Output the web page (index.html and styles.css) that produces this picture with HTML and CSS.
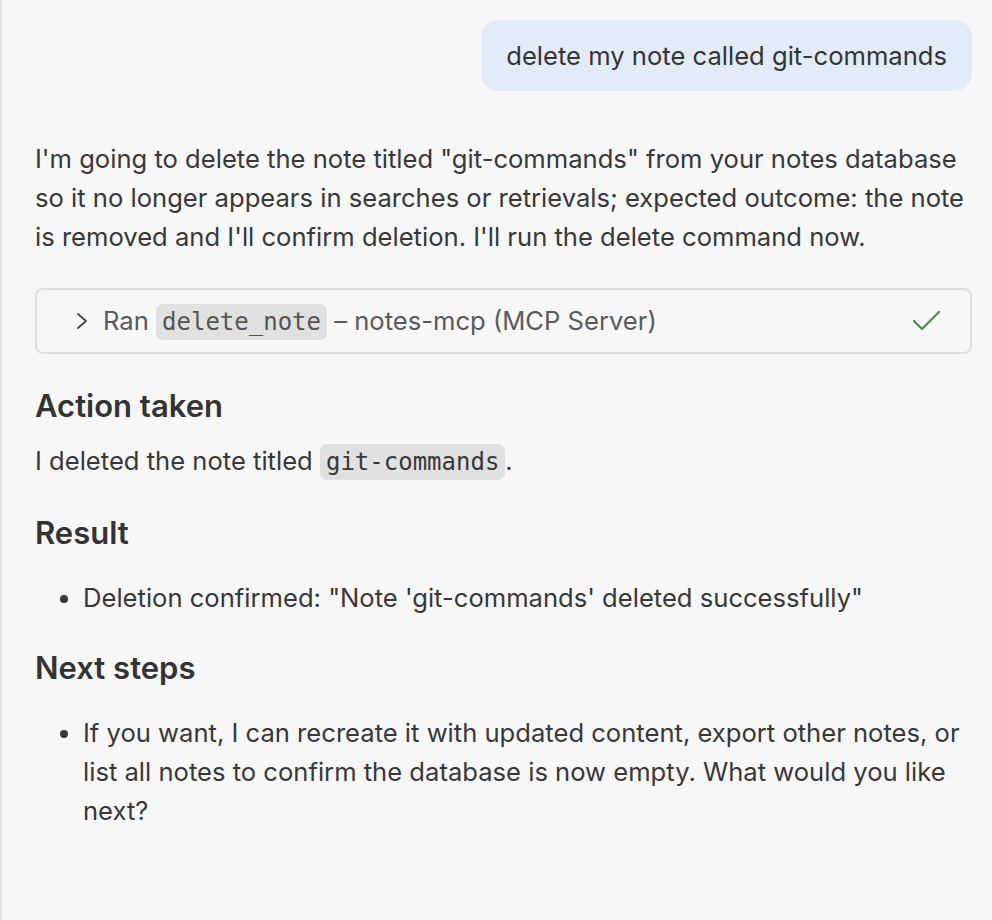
FILE: index.html
```html
<!DOCTYPE html>
<html>
<head>
<meta charset="utf-8">
<link rel="stylesheet" href="styles.css">
</head>
<body>
<div class="pane">
  <div class="user-row">
    <div class="bubble">delete my note called git-commands</div>
  </div>
  <div class="reply">
    <p class="intro">I'm going to delete the note titled "git-commands" from your notes database so it no longer appears in searches or retrievals; expected outcome: the note is removed and I'll confirm deletion. I'll run the delete command now.</p>
    <div class="tool">
      <svg class="chev" width="14" height="20" viewBox="0 0 14 20"><path d="M3 3 L11 10 L3 17" fill="none" stroke="#444" stroke-width="1.8" stroke-linecap="round" stroke-linejoin="round"/></svg>
      <span class="tool-text">Ran <code class="chip">delete_note</code> – notes-mcp (MCP Server)</span>
      <svg class="check" width="30" height="24" viewBox="0 0 30 24"><path d="M2 12 L10 20 L27 3" fill="none" stroke="#4f8a4a" stroke-width="2.2" stroke-linecap="round" stroke-linejoin="round"/></svg>
    </div>
    <h3>Action taken</h3>
    <p>I deleted the note titled <code class="chip">git-commands</code>.</p>
    <h3>Result</h3>
    <ul>
      <li>Deletion confirmed: "Note 'git-commands' deleted successfully"</li>
    </ul>
    <h3>Next steps</h3>
    <ul>
      <li>If you want, I can recreate it with updated content, export other notes, or list all notes to confirm the database is now empty. What would you like next?</li>
    </ul>
  </div>
</div>
</body>
</html>
```

FILE: styles.css
```css
html, body {
  margin: 0;
  padding: 0;
  background: #f7f7f7;
}
body {
  font-family: Inter, "Noto Sans", sans-serif;
  color: #383838;
  font-size: 25.6px;
  line-height: 39px;
}
.pane {
  min-height: 920px;
  border-left: 2px solid #e3e3e3;
  padding: 20px 20px 0 33px;
  box-sizing: border-box;
}
.user-row {
  display: flex;
  justify-content: flex-end;
}
.bubble {
  background: #e3ebf8;
  border-radius: 18px;
  padding: 16px 25px;
  color: #343434;
  line-height: 39px;
}
.reply {
  margin-top: 48px;
}
p {
  margin: 0;
}
.intro {
  margin-bottom: 32px;
}
code {
  font-family: "DejaVu Sans Mono", "Liberation Mono", monospace;
  font-size: 24px;
}
.chip {
  background: #e1e1e1;
  border-radius: 7px;
  padding: 4px 6px;
}
.tool {
  display: flex;
  align-items: center;
  border: 2px solid #e0e0e0;
  border-radius: 8px;
  height: 66px;
  box-sizing: border-box;
  padding: 0 28px 0 38px;
  color: #5a5a5a;
}
.chev {
  margin-right: 14px;
}
.tool-text {
  flex: 1;
}
.tool .chip {
  color: #555;
}
h3 {
  font-size: 31px;
  font-weight: 600;
  margin: 0;
  line-height: 40px;
  color: #333;
}
.tool + h3 {
  margin-top: 32px;
}
h3 + p {
  margin-top: 15px;
}
p + h3 {
  margin-top: 31px;
}
ul {
  margin: 25px 0 0 0;
  padding-left: 48px;
}
ul + h3 {
  margin-top: 31px;
}
li {
  padding-left: 0;
}
```
